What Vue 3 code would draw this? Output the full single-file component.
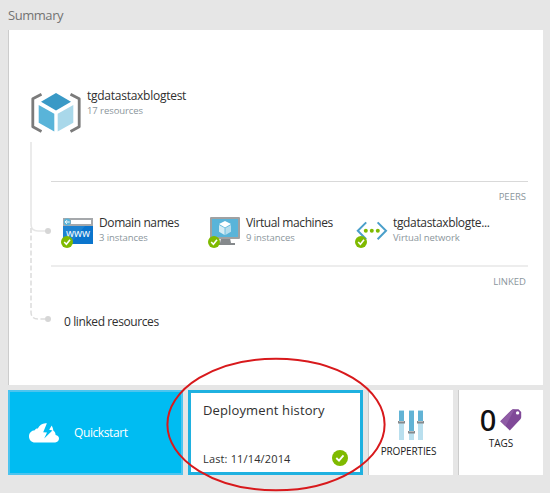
<script setup>
const peers = [
  { icon: 'web', title: 'Domain names', sub: '3 instances', cls: 'w-domain' },
  { icon: 'vm', title: 'Virtual machines', sub: '9 instances', cls: 'w-vm' },
  { icon: 'net', title: 'tgdatastaxblogte...', sub: 'Virtual network', cls: 'w-net' },
]
const sliders = [
  { x: 0, knob: 11 },
  { x: 10, knob: 21 },
  { x: 19, knob: 11 },
]
</script>

<template>
  <main class="page">
    <h1 class="heading">Summary</h1>

    <section class="panel">
      <svg class="connector" width="50" height="190" viewBox="0 0 50 190" fill="none">
        <path d="M9 2V84Q9 91 16 91H26" stroke="#e6e6e6" stroke-width="1.6" />
        <path d="M9 88V172Q9 179 16 179H26" stroke="#dcdcdc" stroke-width="1.5" stroke-dasharray="5 2.5" />
        <circle cx="26" cy="91" r="3" fill="#d6d6d6" />
        <circle cx="26" cy="179" r="3" fill="#d6d6d6" />
      </svg>

      <header class="group">
        <svg width="50" height="42" viewBox="0 0 50 42">
          <path d="M10.5 2.2L1.8 6.8V34.8L10.5 39.4M39.5 2.2L48.2 6.8V34.8L39.5 39.4" fill="none" stroke="#7b7b7b" stroke-width="2.8" stroke-linejoin="round" />
          <path d="M25 1L40 9.7L25 18.6L10 9.7Z" fill="#3999c6" />
          <path d="M7.7 13L23.3 21.8V39.6L7.7 30.8Z" fill="#59b4d9" />
          <path d="M42.3 13L26.7 21.8V39.6L42.3 30.8Z" fill="#a9d8ea" />
        </svg>
        <div class="label">
          <span class="title w-group">tgdatastaxblogtest</span>
          <span class="sub">17 resources</span>
        </div>
      </header>

      <section class="block peers">
        <h2 class="caption">PEERS</h2>
        <div class="row">
          <div v-for="p in peers" :key="p.title" class="peer">
            <svg width="34" height="34" viewBox="0 0 34 34">
              <g v-if="p.icon === 'web'">
                <rect x="2" y="3" width="30" height="26" fill="#0b75cd" />
                <path d="M2 11H24L9 29H2Z" fill="#1e83d1" />
                <rect x="2" y="3" width="30" height="8" fill="#a5a8ab" />
                <rect x="10" y="5" width="20" height="4" fill="#fff" />
                <circle cx="6.2" cy="7" r="3.5" fill="#59b4d9" />
                <path d="M8.7 7H4.2M6 5.2L4.2 7L6 8.8" fill="none" stroke="#fff" />
                <text x="5" y="22" class="www" textLength="24" lengthAdjust="spacingAndGlyphs">www</text>
              </g>
              <g v-else-if="p.icon === 'vm'">
                <path d="M13 23H22L23 28H27V30H10V28H12Z" fill="#85898c" />
                <rect x="2" y="2" width="30" height="22" rx="1" fill="#a0a1a2" />
                <rect x="4" y="4" width="26" height="18" fill="#59b4d9" />
                <path d="M17 6L23 9.1L17 12.4L11 9.1Z" fill="#fff" />
                <path d="M11 10L16.6 13.1V20L11 16.8Z" fill="#d4ecf5" />
                <path d="M23 10L17.4 13.1V20L23 16.8Z" fill="#b5dded" />
              </g>
              <g v-else>
                <path d="M11.2 7.4L2.8 15.8L11.2 24.2" fill="none" stroke="#4a9fca" stroke-width="2" />
                <path d="M22.6 7.4L31 15.8L22.6 24.2" fill="none" stroke="#4a9fca" stroke-width="2" />
                <circle cx="10.8" cy="15.8" r="2" fill="#7fba00" />
                <circle cx="16.8" cy="15.8" r="2" fill="#7fba00" />
                <circle cx="22.8" cy="15.8" r="2" fill="#7fba00" />
              </g>
              <circle cx="6" cy="27" r="6" fill="#7fba00" />
              <path d="M3.2 27L5.4 29.2L9 24.8" fill="none" stroke="#fff" stroke-width="1.6" />
            </svg>
            <div class="label">
              <span class="title" :class="p.cls">{{ p.title }}</span>
              <span class="sub">{{ p.sub }}</span>
            </div>
          </div>
        </div>
      </section>

      <section class="block linked">
        <h2 class="caption">LINKED</h2>
        <p class="title none">0 linked resources</p>
      </section>
    </section>

    <nav class="tiles">
      <div class="tile quick">
        <svg width="30" height="20" viewBox="0 0 30 20">
          <path d="M6 19.5C2.5 19.5 0 16.7 0 13.4C0 10 2.4 7.4 5.8 7.2C6.3 6 7.4 5.5 8.8 5.6C10.3 2.2 13.2 0 17 0.2C22 0.4 24 3.5 24.3 7.5C26 9 26.5 10 26.6 12C28.8 12.2 30 13.8 30 15.6C30 17.8 28.4 19.5 26.2 19.5Z" fill="#fff" />
          <path d="M18 0L14.2 9.2L18 9.6L15.2 15.6L23.4 7.4L20.2 6.8L23 2L22 0Z" fill="#00bcf2" />
        </svg>
        <span>Quickstart</span>
      </div>
      <div class="tile history">
        <h3>Deployment history</h3>
        <div class="last">
          <span>Last: 11/14/2014</span>
          <svg width="16" height="16" viewBox="0 0 16 16">
            <circle cx="8" cy="8" r="8" fill="#7fba00" />
            <path d="M4.3 8L7 10.7L11.5 5.3" fill="none" stroke="#fff" stroke-width="1.8" />
          </svg>
        </div>
      </div>
      <div class="tile props">
        <svg width="26" height="30" viewBox="0 0 26 30">
          <g v-for="s in sliders" :key="s.x" :transform="`translate(${s.x} 0)`">
            <rect x="1" y="0" width="5" height="30" fill="#b9dfee" />
            <rect x="1" y="1" width="5" :height="s.knob" fill="#62b3d5" />
            <rect x="0" :y="s.knob" width="7" height="2.5" fill="#85898c" />
            <rect x="1" :y="s.knob" width="5" height="1" fill="#b4b8ba" />
          </g>
        </svg>
        <span>PROPERTIES</span>
      </div>
      <div class="tile tags">
        <div class="count">
          <b>0</b>
          <svg width="22" height="22" viewBox="0 0 22 22">
            <path d="M0.3 12.3L11.6 1Q12.4 0.2 13.6 0.2H18.5L21.2 3V8.2Q21.2 9.3 20.4 10.2L9.8 21.4Z" fill="#804998" />
            <path d="M0.3 12.3L11.6 1Q12.4 0.2 13.6 0.2H14.5L5.5 17.2Z" fill="#8f5ca5" />
            <circle cx="17.6" cy="3.9" r="1.7" fill="#fff" />
          </svg>
        </div>
        <span>TAGS</span>
      </div>
    </nav>

    <svg class="marker" width="222" height="138" viewBox="0 0 222 138">
      <ellipse cx="111" cy="67.5" rx="108.6" ry="65.8" fill="none" stroke="#d8191c" stroke-width="2" />
    </svg>
  </main>
</template>

<style>
body { background: #e6e6e6; }
</style>

<style scoped>
.page {
  position: relative;
  box-sizing: border-box;
  width: 550px;
  height: 493px;
  padding: 5px 7px 0 8px;
  overflow: hidden;
  background: #e6e6e6;
  color: #303030;
  font-family: "Open Sans", "Noto Sans", sans-serif;
}
h1, h2, h3, p { margin: 0; font-weight: 400; }
.heading { height: 25px; color: #737373; font: 400 13px/21px "Open Sans", sans-serif; letter-spacing: -0.45px; }
.panel {
  position: relative;
  box-sizing: border-box;
  height: 355px;
  padding: 62px 15px 0 22px;
  border-left: 1px solid #ccc;
  background: #fff;
}
.connector { position: absolute; left: 13px; top: 110px; }
.group { display: flex; gap: 6px; height: 89px; }
.label { display: flex; flex-direction: column; }
.group .label { margin-top: -4px; }
.title { font-size: 12px; line-height: 16px; white-space: nowrap; letter-spacing: -0.4px; }
.w-group { letter-spacing: -0.26px; }
.w-net { letter-spacing: -0.35px; }
.sub { color: #8b969c; font-size: 9.5px; line-height: 14px; white-space: nowrap; letter-spacing: -0.07px; }
.block { margin-left: 20px; border-top: 1px solid #d9d9d9; }
.peers { height: 83px; }
.linked { border-top: 2px solid #ededed; }
.caption { padding: 8px 2px 0 0; color: #8b969c; font-size: 9.5px; line-height: 14px; text-align: right; }
.row { display: grid; grid-template-columns: 147px 147px 1fr; padding: 11px 0 0 10px; }
.peer { display: flex; gap: 4px; }
.www { fill: #fff; font: 400 10px "Open Sans", sans-serif; }
.none { padding: 25px 0 0 13px; }
.tiles { display: grid; grid-template-columns: 175px 175px 85px 85px; gap: 5px; margin-top: 5px; }
.tile { box-sizing: border-box; height: 85px; background: #fff; }
.quick {
  display: flex;
  align-items: center;
  gap: 15px;
  padding-left: 19px;
  border: 2px solid #4cc4ef;
  background: #00bcf2;
  color: #fff;
  font-size: 12px;
  letter-spacing: -0.4px;
}
.history { padding: 8px 12px 0; border: 3px solid #1fb1e0; }
.history h3 { font-size: 13px; line-height: 18px; letter-spacing: 0.13px; }
.last { display: flex; justify-content: space-between; align-items: center; margin-top: 28px; font-size: 11px; line-height: 20px; letter-spacing: 0.15px; }
.last span { padding-top: 2px; }
.props, .tags { display: flex; flex-direction: column; align-items: center; border-left: 1px solid #ccc; font-size: 10px; color: #222; }
.props { padding-top: 20px; }
.props span { margin: 4px 5px 0 0; line-height: 14px; letter-spacing: -0.15px; }
.tags { padding-top: 14px; }
.count { display: flex; align-items: center; gap: 4px; height: 32px; }
.count b { font: 500 29px/32px "Noto Sans", sans-serif; color: #111; }
.tags span { line-height: 14px; }
.marker { position: absolute; left: 165px; top: 357px; }
</style>
